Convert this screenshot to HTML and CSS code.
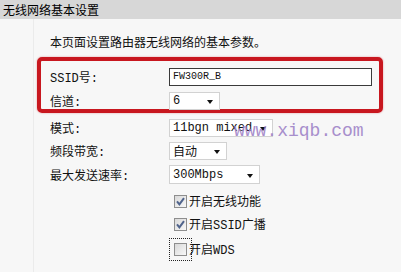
FILE: index.html
```html
<!DOCTYPE html>
<html lang="zh-CN">
<head>
  <meta charset="UTF-8">
  <title>无线网络基本设置</title>
  <link rel="stylesheet" href="styles.css">
</head>
<body>
  <!-- Page title bar -->
  <div class="title">无线网络基本设置</div>

  <div class="panel">
    <p class="desc">本页面设置路由器无线网络的基本参数。</p>

    <!-- Highlighted fields -->
    <div class="highlight">
      <div class="row">
        <span class="label">SSID号:</span>
        <span class="input">FW300R_B</span>
      </div>
      <div class="row">
        <span class="label">信道:</span>
        <span class="select w-ch">6<i class="arrow"></i></span>
      </div>
    </div>

    <div class="rows">
      <div class="row">
        <span class="label">模式:</span>
        <span class="select w-mode">11bgn mixed<i class="arrow"></i></span>
      </div>
      <div class="row">
        <span class="label">频段带宽:</span>
        <span class="select w-band">自动<i class="arrow"></i></span>
      </div>
      <div class="row">
        <span class="label">最大发送速率:</span>
        <span class="select w-rate">300Mbps<i class="arrow"></i></span>
      </div>
    </div>

    <div class="checks">
      <label class="check">
        <span class="box"><svg width="11" height="11" viewBox="0 0 11 11"><path d="M2 5.4 L4.4 8.4 L9 2.2" fill="none" stroke="#50648c" stroke-width="2"/></svg></span>开启无线功能
      </label>
      <label class="check">
        <span class="box"><svg width="11" height="11" viewBox="0 0 11 11"><path d="M2 5.4 L4.4 8.4 L9 2.2" fill="none" stroke="#50648c" stroke-width="2"/></svg></span>开启SSID广播
      </label>
      <label class="check last">
        <span class="box focus"></span>开启WDS
      </label>
    </div>
  </div>

  <div class="watermark">www.xiqb.com</div>
</body>
</html>
```

FILE: styles.css
```css
/* General Styles */
body {
  margin: 0;
  background: #f7f7f7;
  color: #111;
  font-family: "Liberation Mono", "Noto Sans CJK SC", monospace;
  font-size: 12px;
  position: relative;
  height: 272px;
  overflow: hidden;
}

.title {
  height: 19px;
  line-height: 19px;
  padding-left: 3px;
  background: #d7d7d7;
  font-family: "Noto Sans CJK SC", sans-serif;
  color: #000;
}

.panel {
  margin-left: 33px;
  border-left: 1px solid #ebebeb;
  height: 253px;
}

.desc {
  margin: 0;
  padding: 15px 0 0 16px;
  line-height: 16px;
  font-family: "Noto Sans CJK SC", sans-serif;
}

/* Red highlight box */
.highlight {
  box-sizing: border-box;
  width: 346px;
  height: 56px;
  margin: 7px 0 0 3px;
  padding: 7px 0 0 9px;
  border: 4px solid #c8171f;
  border-radius: 5px;
  box-shadow: 0 0 2px rgba(200, 23, 31, 0.45);
  display: grid;
  grid-auto-rows: 18px;
  row-gap: 6px;
}

.rows {
  margin-top: 6px;
  padding-left: 16px;
  display: grid;
  grid-auto-rows: 18px;
  row-gap: 5px;
}

.row {
  display: grid;
  grid-template-columns: 119px auto;
  align-items: center;
}

.row .select,
.row .input {
  justify-self: start;
}

/* Form controls */
.input {
  box-sizing: border-box;
  width: 203px;
  height: 18px;
  padding-left: 3px;
  border: 1px solid #3a3a3a;
  background: #fff;
  font-size: 10px;
  line-height: 16px;
}

.select {
  box-sizing: border-box;
  height: 18px;
  padding: 0 6px 0 3px;
  border: 1px solid #d2d2d2;
  background: #fff;
  display: flex;
  justify-content: space-between;
  align-items: center;
}

.w-ch { width: 51px; }
.w-mode { width: 104px; }
.w-band { width: 58px; }
.w-rate { width: 91px; height: 19px; }

.arrow {
  width: 0;
  height: 0;
  border-top: 4px solid #111;
  border-left: 3.5px solid transparent;
  border-right: 3.5px solid transparent;
  margin-top: 2px;
}

/* Checkboxes */
.checks {
  margin-top: 9px;
  padding-left: 140px;
  display: flex;
  flex-direction: column;
  gap: 5px;
}

.check {
  height: 18px;
  display: flex;
  align-items: center;
  font-size: 12px;
}

.check.last {
  margin-top: 2px;
}

.box {
  box-sizing: border-box;
  width: 13px;
  height: 13px;
  margin-right: 2px;
  border: 1px solid #8e8e8e;
  background: linear-gradient(135deg, #d9d9d9, #f8f8f8);
  display: flex;
  align-items: center;
  justify-content: center;
}

.box.focus {
  outline: 1px dotted #222;
  outline-offset: 4px;
}

.watermark {
  position: absolute;
  left: 234px;
  top: 121px;
  font-family: "Liberation Mono", monospace;
  font-size: 18px;
  color: #9f84c8;
  opacity: 0.9;
}
```
